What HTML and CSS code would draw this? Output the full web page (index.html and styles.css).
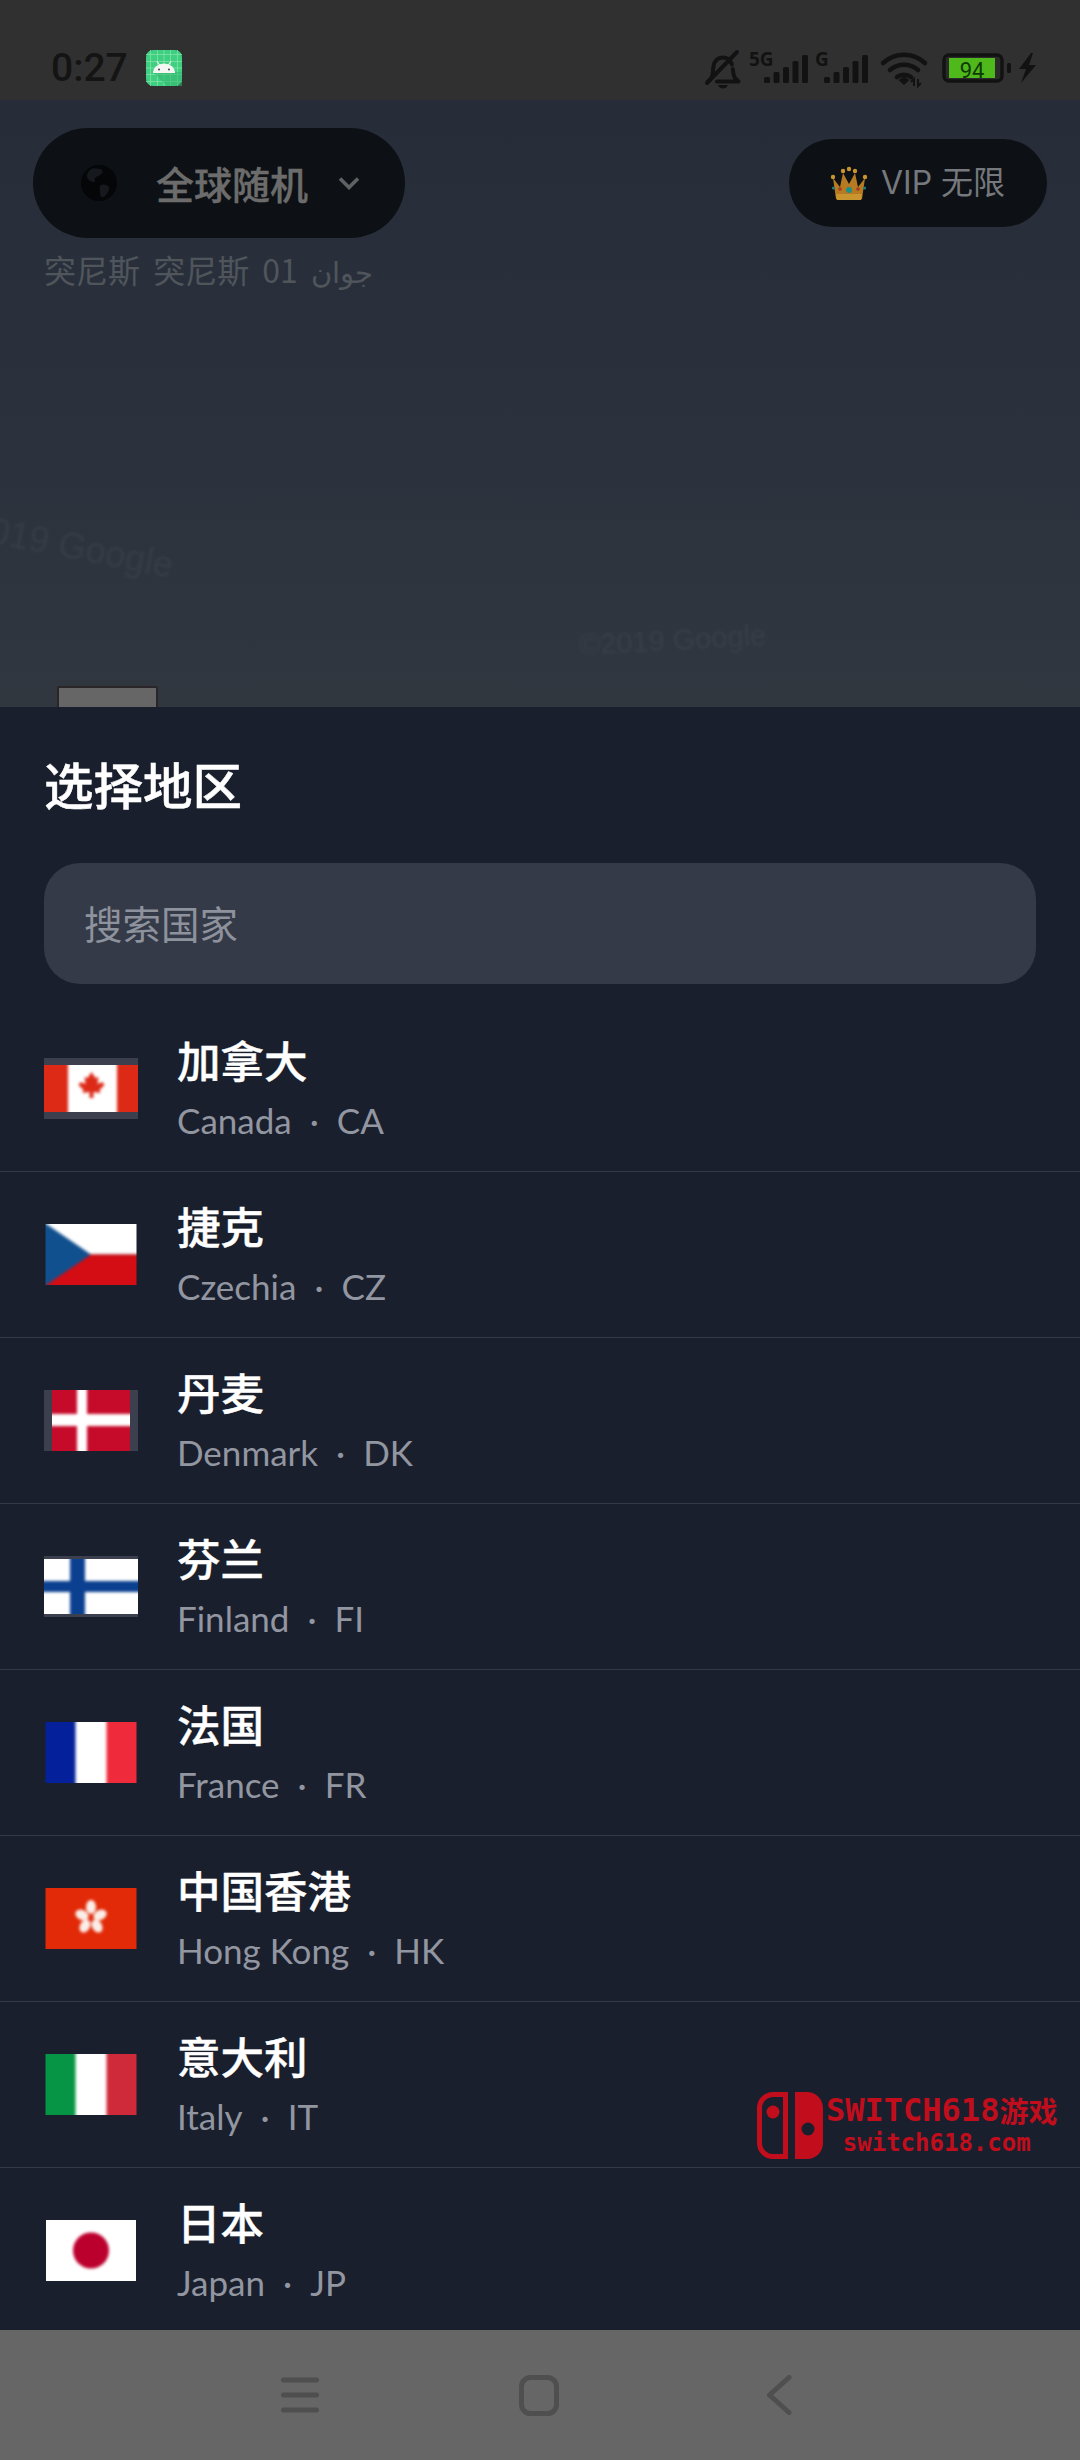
FILE: index.html
```html
<!DOCTYPE html>
<html lang="zh">
<head>
<meta charset="utf-8">
<title>选择地区</title>
<link rel="stylesheet" href="styles.css">
</head>
<body>
<div class="screen">
  <header class="status">
    <div class="status-left">
      <span class="time">0:27</span>
      <svg class="app-icon" viewBox="0 0 36 36">
        <rect width="36" height="36" rx="7" fill="#3fcf80"/>
        <path d="M4.500 0V36M11.500 0V36M18 0V36M24.500 0V36M31.500 0V36M0 4.500H36M0 11.500H36M0 18H36M0 24.500H36M0 31.500H36" stroke="#7fe3a8" stroke-width=".8"/>
        <path d="M7 22L21 36H36V22Z" fill="#33b56e" opacity=".55"/>
        <path d="M7 23a11 9.500 0 0 1 22 0Z" fill="#f4f6f4"/>
        <path d="M11 11.500l3 4M25 11.500l-3 4" stroke="#f4f6f4" stroke-width="1.100"/>
        <circle cx="13" cy="19.500" r=".9" fill="#333"/><circle cx="23" cy="19.500" r=".9" fill="#333"/>
      </svg>
    </div>
    <svg class="status-icons" viewBox="0 0 340 40">
      <g fill="none" stroke="#121212" stroke-width="4" stroke-linecap="round" stroke-linejoin="round">
        <path d="M8 31.500c3-2 4.400-4.500 4.800-9l.6-6c.6-5.500 4.600-9 9-9s8 2.500 9.600 7M32.800 19l.8 5.500c.5 3 2 5 5 7H17"/>
        <path d="M7 33L37 2"/>
      </g>
      <path d="M18 35h10c-1 2.500-2.800 3.500-5 3.500S19 37.500 18 35Z" fill="#121212"/>
      <text x="49" y="16" class="net">5G</text>
      <g fill="#121212">
        <rect x="64" y="27" width="6" height="6" rx="1.500"/><rect x="73.500" y="22" width="6" height="11" rx="1.500"/><rect x="83" y="17" width="6" height="16" rx="1.500"/><rect x="92.500" y="11" width="6" height="22" rx="1.500"/><rect x="102" y="5" width="6" height="28" rx="1.500"/>
      </g>
      <text x="115" y="16" class="net">G</text>
      <g fill="#121212">
        <rect x="124" y="27" width="6" height="6" rx="1.500"/><rect x="133.500" y="22" width="6" height="11" rx="1.500"/><rect x="143" y="17" width="6" height="16" rx="1.500"/><rect x="152.500" y="11" width="6" height="22" rx="1.500"/><rect x="162" y="5" width="6" height="28" rx="1.500"/>
      </g>
      <g fill="none" stroke="#121212" stroke-width="4.600" stroke-linecap="round">
        <path d="M183 13c12-11 30-11 42 0"/>
        <path d="M190 20c8-7 20-7 28 0"/>
        <path d="M197 27c4-3 10-3 14 0"/>
      </g>
      <path d="M198.500 30l5.500-3.500 5.500 3.500-5.500 5Z" fill="#121212"/>
      <path d="M214 36v-7l-3 3M218 29v7l3-3" fill="none" stroke="#121212" stroke-width="2"/>
      <rect x="244" y="5" width="58" height="26" rx="5" fill="#2a2a2a" stroke="#121212" stroke-width="3.400"/>
      <rect x="249" y="8" width="46" height="20" fill="#4fb81a"/>
      <text x="272" y="28" class="batt">94</text>
      <rect x="307" y="13" width="4" height="10" rx="1.500" fill="#121212"/>
      <path d="M331 3L319 19H326L321 33 336 15H329L333 3Z" fill="#121212"/>
    </svg>
  </header>

  <section class="map">
    <span class="map-mark map-mark-a">019 Google</span>
    <span class="map-mark map-mark-b">©2019 Google</span>
    <span class="map-box"></span>
    <div class="map-top">
      <div class="region-pill">
        <svg class="globe" viewBox="0 0 36 36">
          <circle cx="18" cy="18" r="18" fill="#050607"/>
          <path d="M12 3c3 1 7 0 9 2s-1 5-4 6-4 3-3 5-5 1-7-2-1-8 5-11ZM20 20c3-1 7 0 8 2s-1 6-4 9-5 1-5-3-1-7 1-8Z" fill="#15181c"/>
        </svg>
        <span class="region-text">全球随机</span>
        <svg class="chev" viewBox="0 0 22 14"><path d="M2 2.500L11 11.500 20 2.500" fill="none" stroke="#5f6163" stroke-width="3.600"/></svg>
      </div>
      <div class="vip-pill">
        <svg class="crown" viewBox="0 0 38 35">
          <path d="M3 12l7 9 3-14 6 11 6-11 3 14 7-9-3 21H6Z" fill="#b57a22"/>
          <path d="M6 28h26l-.8 6H6.800Z" fill="#c9952f"/>
          <circle cx="3" cy="11" r="2.200" fill="#c9952f"/><circle cx="13" cy="5" r="2.200" fill="#c9952f"/><circle cx="19" cy="3" r="2.200" fill="#c9952f"/><circle cx="25" cy="5" r="2.200" fill="#c9952f"/><circle cx="35" cy="11" r="2.200" fill="#c9952f"/>
          <circle cx="19" cy="24" r="3" fill="#1f8f86"/><circle cx="10" cy="23" r="1.800" fill="#a33a22"/><circle cx="28" cy="23" r="1.800" fill="#a33a22"/><circle cx="3.500" cy="22" r="1.600" fill="#1f7f86"/><circle cx="34.500" cy="22" r="1.600" fill="#1f7f86"/>
        </svg>
        <span class="vip-text">VIP 无限</span>
      </div>
    </div>
    <p class="location">突尼斯 突尼斯 01 <span class="loc-ar">جوان</span></p>
  </section>

  <section class="sheet">
    <h1 class="sheet-title">选择地区</h1>
    <div class="search">搜索国家</div>
    <ul class="list">
      <li class="row">
        <svg class="flag" viewBox="0 0 94 61"><rect width="94" height="61" fill="#3c404e"/><svg y="7" width="94" height="47" viewBox="0 0 94 47"><g class="soft"><rect x="-5" y="-5" width="104" height="57" fill="#fff"/><rect x="-5" y="-5" width="29" height="57" fill="#dc2a17"/><rect x="73" y="-5" width="29" height="57" fill="#dc2a17"/><path d="M47.500 7l4 6 3-1-1 7 5-2 2 3-5 5 1 3-7-1v6h-4v-6l-7 1 1-3-5-5 2-3 5 2-1-7 3 1Z" fill="#dc2a17"/></g></svg></svg>
        <div class="names"><p class="zh">加拿大</p><p class="en">Canada<span class="dot">·</span>CA</p></div>
      </li>
      <li class="row">
        <svg class="flag" viewBox="0 0 94 61"><g class="soft"><rect x="-5" y="-5" width="104" height="35.500" fill="#fff"/><rect x="-5" y="30.500" width="104" height="36" fill="#d40c13"/><path d="M-5-5L47 30.500-5 66Z" fill="#11508e"/></g><rect width="1.500" height="61" fill="#1a1f2d"/><rect x="92.500" width="1.500" height="61" fill="#1a1f2d"/></svg>
        <div class="names"><p class="zh">捷克</p><p class="en">Czechia<span class="dot">·</span>CZ</p></div>
      </li>
      <li class="row">
        <svg class="flag" viewBox="0 0 94 61"><rect width="94" height="61" fill="#3c404e"/><svg x="8" width="78" height="61" viewBox="0 0 78 61"><g class="soft"><rect x="-5" y="-5" width="88" height="71" fill="#c60b2a"/><rect x="-5" y="24" width="88" height="12" fill="#fff"/><rect x="25" y="-5" width="10" height="71" fill="#fff"/></g></svg></svg>
        <div class="names"><p class="zh">丹麦</p><p class="en">Denmark<span class="dot">·</span>DK</p></div>
      </li>
      <li class="row">
        <svg class="flag" viewBox="0 0 94 61"><rect width="94" height="61" fill="#3c404e"/><svg y="3" width="94" height="55" viewBox="0 0 94 55"><g class="soft"><rect x="-5" y="-5" width="104" height="65" fill="#fff"/><rect x="-5" y="22" width="104" height="11" fill="#0b3f8f"/><rect x="26" y="-5" width="15" height="65" fill="#0b3f8f"/></g></svg></svg>
        <div class="names"><p class="zh">芬兰</p><p class="en">Finland<span class="dot">·</span>FI</p></div>
      </li>
      <li class="row">
        <svg class="flag" viewBox="0 0 94 61"><svg x="1.500" width="91" height="61" viewBox="0 0 91 61"><g class="soft"><rect x="-5" y="-5" width="101" height="71" fill="#fff"/><rect x="-5" y="-5" width="35" height="71" fill="#04209a"/><rect x="61" y="-5" width="35" height="71" fill="#ef2a3a"/></g></svg></svg>
        <div class="names"><p class="zh">法国</p><p class="en">France<span class="dot">·</span>FR</p></div>
      </li>
      <li class="row">
        <svg class="flag" viewBox="0 0 94 61"><rect x="1.500" width="91" height="61" fill="#e32a08"/><g class="soft" fill="#fbeee8"><ellipse cx="47" cy="19" rx="5" ry="7"/><ellipse cx="38" cy="27" rx="7" ry="5" transform="rotate(25 38 27)"/><ellipse cx="56" cy="27" rx="7" ry="5" transform="rotate(-25 56 27)"/><ellipse cx="41" cy="38" rx="5" ry="7" transform="rotate(30 41 38)"/><ellipse cx="53" cy="38" rx="5" ry="7" transform="rotate(-30 53 38)"/></g></svg>
        <div class="names"><p class="zh">中国香港</p><p class="en">Hong Kong<span class="dot">·</span>HK</p></div>
      </li>
      <li class="row">
        <svg class="flag" viewBox="0 0 94 61"><svg x="1.500" width="91" height="61" viewBox="0 0 91 61"><g class="soft"><rect x="-5" y="-5" width="101" height="71" fill="#fff"/><rect x="-5" y="-5" width="35" height="71" fill="#069545"/><rect x="61" y="-5" width="35" height="71" fill="#cf2a3a"/></g></svg></svg>
        <div class="names"><p class="zh">意大利</p><p class="en">Italy<span class="dot">·</span>IT</p></div>
      </li>
      <li class="row">
        <svg class="flag" viewBox="0 0 94 61"><rect x="2" width="90" height="61" fill="#fff"/><circle class="soft" cx="47" cy="30.500" r="18" fill="#bc002d"/></svg>
        <div class="names"><p class="zh">日本</p><p class="en">Japan<span class="dot">·</span>JP</p></div>
      </li>
    </ul>
    <div class="watermark">
      <svg class="wm-logo" viewBox="0 0 66 67">
        <path fill-rule="evenodd" d="M31 0H16C7 0 0 7 0 16V51C0 60 7 67 16 67H31ZM26 5V62H16C10 62 5 57 5 51V16C5 10 10 5 16 5Z" fill="#c10d1c"/>
        <circle cx="16" cy="20" r="6.500" fill="#c10d1c"/>
        <path fill-rule="evenodd" d="M38 0H50C59 0 66 7 66 16V51C66 60 59 67 50 67H38ZM51 30.500a6.500 6.500 0 1 0 0 13 6.500 6.500 0 0 0 0-13Z" fill="#c10d1c"/>
      </svg>
      <div class="wm-text">
        <span class="wm-main">SWITCH618<span class="wm-cjk">游戏</span></span>
        <span class="wm-sub">switch618.com</span>
      </div>
    </div>
  </section>

  <nav class="navbar">
    <svg class="nav-ico nav-menu" viewBox="0 0 38 36"><path d="M2.500 3H35.500M2.500 18H35.500M2.500 33H35.500" stroke="#4f4f4f" stroke-width="5" stroke-linecap="round"/></svg>
    <svg class="nav-ico nav-home" viewBox="0 0 40 41"><rect x="2.500" y="2.500" width="35" height="36" rx="9" fill="none" stroke="#4f4f4f" stroke-width="5"/></svg>
    <svg class="nav-ico nav-back" viewBox="0 0 26 40"><path d="M23 2.500L3.500 20 23 37.500" fill="none" stroke="#4f4f4f" stroke-width="5" stroke-linecap="round" stroke-linejoin="round"/></svg>
  </nav>
</div>
</body>
</html>
```

FILE: styles.css
```css
* { box-sizing: border-box; margin: 0; padding: 0; }
html, body { width: 1080px; height: 2460px; overflow: hidden; background: #1a1f2d; }
body { font-family: "Noto Sans CJK SC", "Noto Sans", sans-serif; }
.screen { width: 1080px; height: 2460px; display: flex; flex-direction: column; overflow: hidden; }

.status { height: 100px; flex: none; background: #303030; display: flex; justify-content: space-between; align-items: flex-start; padding: 50px 40px 0 51px; }
.status-left { display: flex; align-items: center; gap: 18px; height: 36px; }
.time { font-family: Roboto, sans-serif; font-size: 39px; font-weight: 500; color: #141414; line-height: 36px; }
.app-icon { width: 36px; height: 36px; display: block; }
.status-icons { width: 340px; height: 40px; display: block; overflow: visible; }
.net { font-family: "Open Sans", sans-serif; font-weight: 700; font-size: 19px; fill: #121212; }
.batt { font-family: Roboto, sans-serif; font-size: 22px; fill: #0f3a05; text-anchor: middle; }

.map { height: 607px; flex: none; position: relative; overflow: hidden; background: linear-gradient(180deg, #262d38 0%, #2b323d 60%, #30373f 100%); padding: 28px 33px 0; }
.map-top { display: flex; justify-content: space-between; align-items: center; }
.region-pill { width: 372px; height: 110px; border-radius: 55px; background: #0d1014; display: flex; align-items: center; padding-left: 48px; }
.globe { width: 36px; height: 36px; flex: none; }
.region-text { font-size: 38px; font-weight: 500; -webkit-text-stroke: .4px #6c6c6c; color: #6c6c6c; margin-left: 39px; line-height: 1; }
.chev { width: 22px; height: 14px; margin-left: 30px; }
.vip-pill { width: 258px; height: 88px; border-radius: 44px; background: #0d1014; display: flex; align-items: center; padding-left: 41px; gap: 13px; }
.crown { width: 38px; height: 35px; flex: none; }
.vip-text { font-family: Inter, "Noto Sans CJK SC", sans-serif; font-size: 32px; color: #75797d; line-height: 1; }
.location { font-size: 32px; line-height: 40px; color: #50555c; margin: 11px 0 0 11px; word-spacing: 6px; }
.loc-ar { font-size: 29px; }
.map-mark { position: absolute; font-family: "Liberation Sans", sans-serif; color: rgba(255,255,255,.04); white-space: nowrap; filter: blur(1px); }
.map-mark-a { left: -6px; top: 410px; font-size: 36px; transform: rotate(11deg); transform-origin: 0 0; }
.map-mark-b { left: 578px; top: 529px; font-size: 29px; transform: rotate(-3deg); transform-origin: 0 0; }
.map-box { position: absolute; left: 57px; top: 586px; width: 101px; height: 30px; background: #666; border: 2px solid #2a2527; border-radius: 2px; }

.sheet { flex: 1; min-height: 0; position: relative; overflow: hidden; background: #1a1f2d; display: flex; flex-direction: column; padding-top: 45px; }
.sheet-title { font-size: 49.500px; font-weight: 500; -webkit-text-stroke: .5px #fff; color: #fff; line-height: 64px; margin-left: 44px; }
.search { height: 121px; margin: 47px 44px 0; border-radius: 36px; background: #343a48; color: #8d929c; font-size: 38.500px; display: flex; align-items: center; padding: 0 0 4px 40px; flex: none; }
.list { list-style: none; margin-top: 22px; flex: none; }
.row { height: 166px; border-bottom: 1px solid #343946; display: flex; align-items: center; padding-left: 44px; gap: 39px; }
.flag { width: 94px; height: 61px; flex: none; display: block; margin-top: -1px; }
.soft { filter: blur(1.4px); }
.names { display: flex; flex-direction: column; margin-top: -3px; }
.zh { font-size: 43.500px; font-weight: 500; -webkit-text-stroke: .4px #fff; color: #fff; line-height: 56px; }
.en { font-family: Lato, "Noto Sans", sans-serif; font-size: 35px; color: #9296a1; line-height: 44px; margin-top: 10px; display: flex; }
.dot { margin: 0 18px; }

.watermark { position: absolute; left: 757px; top: 1385px; display: flex; gap: 3px; }
.wm-logo { width: 66px; height: 67px; flex: none; }
.wm-text { display: flex; flex-direction: column; align-items: center; font-family: "DejaVu Sans Mono", "Noto Sans CJK SC", monospace; font-weight: 700; color: #c10d1c; }
.wm-main { font-size: 32px; line-height: 36px; white-space: nowrap; display: flex; align-items: center; }
.wm-cjk { font-family: "Noto Sans CJK SC", sans-serif; font-size: 29px; }
.wm-sub { font-size: 24px; line-height: 28px; margin: 1px 10px 0 0; white-space: nowrap; }

.navbar { height: 130px; flex: none; background: #666; display: flex; align-items: center; padding-left: 281px; }
.nav-ico { display: block; flex: none; }
.nav-menu { width: 38px; height: 36px; }
.nav-home { width: 40px; height: 41px; margin-left: 200px; }
.nav-back { width: 26px; height: 40px; margin-left: 207px; }
```
